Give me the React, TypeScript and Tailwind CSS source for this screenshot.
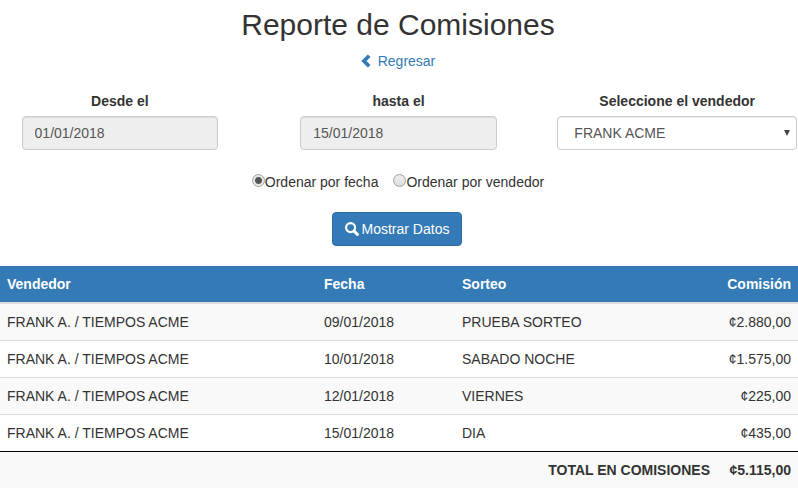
import { useState } from "react";

type Row = {
  seller: string;
  date: string;
  draw: string;
  commission: string;
};

const ROWS: Row[] = [
  { seller: "FRANK A. / TIEMPOS ACME", date: "09/01/2018", draw: "PRUEBA SORTEO", commission: "¢2.880,00" },
  { seller: "FRANK A. / TIEMPOS ACME", date: "10/01/2018", draw: "SABADO NOCHE", commission: "¢1.575,00" },
  { seller: "FRANK A. / TIEMPOS ACME", date: "12/01/2018", draw: "VIERNES", commission: "¢225,00" },
  { seller: "FRANK A. / TIEMPOS ACME", date: "15/01/2018", draw: "DIA", commission: "¢435,00" },
];

const ORDER_OPTIONS = [
  { value: "fecha", label: "Ordenar por fecha" },
  { value: "vendedor", label: "Ordenar por vendedor" },
];

function ChevronLeftIcon() {
  return (
    <svg viewBox="0 0 10 14" className="h-[14px] w-[10px]" fill="currentColor" aria-hidden="true">
      <path d="M6.9 0.4 9.5 3 5.5 7l4 4-2.6 2.6L0.3 7z" />
    </svg>
  );
}

function SearchIcon() {
  return (
    <svg viewBox="0 0 14 14" className="size-[14px]" fill="none" stroke="currentColor" aria-hidden="true">
      <circle cx="5.6" cy="5.6" r="4.5" strokeWidth="2.2" />
      <path d="M9.2 9.2 12.4 12.4" strokeWidth="3" strokeLinecap="round" />
    </svg>
  );
}

function DateField({ id, label, value }: { id: string; label: string; value: string }) {
  return (
    <div className="flex flex-col items-center">
      <label htmlFor={id} className="mb-[5px] font-bold">
        {label}
      </label>
      <input
        id={id}
        type="text"
        readOnly
        value={value}
        className="h-[34px] w-[82%] rounded border border-[#ccc] bg-[#eee] px-3 text-[#555] shadow-[inset_0_1px_1px_rgba(0,0,0,0.075)]"
      />
    </div>
  );
}

export default function App() {
  const [order, setOrder] = useState("fecha");

  return (
    <main className="bg-white pt-2 font-['Liberation_Sans',Arial,sans-serif] text-[14px] leading-5 text-[#333]">
      <h1 className="pr-[2px] text-center text-[30px] leading-[33px]">Reporte de Comisiones</h1>
      <div className="mt-[10px] flex justify-center pr-[2px]">
        <a href="#" className="flex items-center gap-[7px] text-[#337ab7]">
          <ChevronLeftIcon />
          Regresar
        </a>
      </div>

      <form onSubmit={(event) => event.preventDefault()}>
        <div className="mt-5 grid grid-cols-3 gap-x-[39px] pr-px">
          <DateField id="from" label="Desde el" value="01/01/2018" />
          <DateField id="to" label="hasta el" value="15/01/2018" />
          <div className="flex flex-col items-center">
            <label htmlFor="seller" className="mb-[5px] font-bold">
              Seleccione el vendedor
            </label>
            <div className="relative w-full">
              <select
                id="seller"
                className="block h-[34px] w-full appearance-none rounded border border-[#ccc] bg-white px-4 text-[#555] shadow-[inset_0_1px_1px_rgba(0,0,0,0.075)]"
              >
                <option>FRANK ACME</option>
              </select>
              <svg
                viewBox="0 0 6 6"
                className="pointer-events-none absolute top-[14px] right-[7px] size-[6px]"
                fill="#444"
                aria-hidden="true"
              >
                <path d="M0 0h6L3 6z" />
              </svg>
            </div>
          </div>
        </div>

        <div className="mt-[22px] flex justify-center gap-[15px] pr-[2px]">
          {ORDER_OPTIONS.map((option) => (
            <label key={option.value} className="flex items-start">
              <input
                type="radio"
                name="order"
                value={option.value}
                checked={order === option.value}
                onChange={() => setOrder(option.value)}
                className="mt-[2px] size-[13px] appearance-none rounded-full border border-[#a0a0a0] bg-linear-to-b from-[#eee] to-[#ddd] checked:bg-[radial-gradient(circle,#555_3px,#e8e8e8_4px)]"
              />
              {option.label}
            </label>
          ))}
        </div>

        <div className="mt-5 flex justify-center pr-[4px]">
          <button
            type="submit"
            className="flex h-[34px] items-center gap-[3px] rounded border border-[#2e6da4] bg-[#337ab7] px-3 text-white"
          >
            <SearchIcon />
            Mostrar Datos
          </button>
        </div>
      </form>

      <table className="mt-5 w-full table-fixed border-separate border-spacing-0 text-left">
        <colgroup>
          <col className="w-[317px]" />
          <col className="w-[138px]" />
          <col />
          <col className="w-[81px]" />
        </colgroup>
        <thead>
          <tr className="bg-[#337ab7] text-white">
            <th className="border-b-2 border-[#ddd] px-[7px] py-2">Vendedor</th>
            <th className="border-b-2 border-[#ddd] px-[7px] py-2">Fecha</th>
            <th className="border-b-2 border-[#ddd] px-[7px] py-2">Sorteo</th>
            <th className="border-b-2 border-[#ddd] px-[7px] py-2 text-right">Comisión</th>
          </tr>
        </thead>
        <tbody className="[&>tr:not(:last-child)>td]:border-b">
          {ROWS.map((row) => (
            <tr key={row.date} className="odd:bg-[#f9f9f9]">
              <td className="border-[#ddd] px-[7px] py-2">{row.seller}</td>
              <td className="border-[#ddd] px-[7px] py-2">{row.date}</td>
              <td className="border-[#ddd] px-[7px] py-2">{row.draw}</td>
              <td className="border-[#ddd] px-[7px] py-2 text-right">{row.commission}</td>
            </tr>
          ))}
        </tbody>
        <tfoot>
          <tr className="bg-[#f9f9f9] text-right">
            <th colSpan={3} scope="row" className="border-t border-black px-[7px] py-2">
              TOTAL EN COMISIONES
            </th>
            <td className="border-t border-black px-[7px] py-2 font-bold">¢5.115,00</td>
          </tr>
        </tfoot>
      </table>
    </main>
  );
}
